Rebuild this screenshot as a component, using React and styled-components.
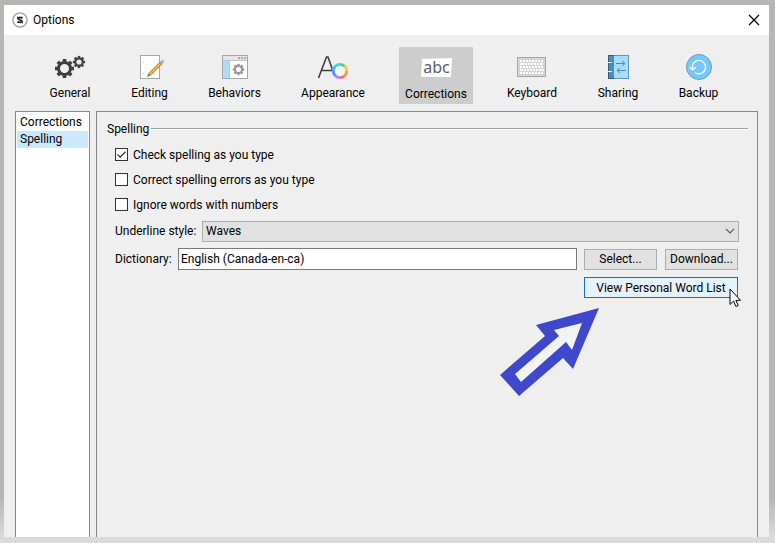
import React from 'react';
import styled, { createGlobalStyle } from 'styled-components';

const GlobalStyle = createGlobalStyle`
  *, *::before, *::after { box-sizing: border-box; }
  body { margin: 0; background: #dadbda; }
  body, button, input, select { font: 12px/16px Roboto, "Open Sans", sans-serif; color: #000; }
`;

const Desktop = styled.div`
  display: flex;
  min-height: 100vh;
  padding: 5px 6px 6px 4px;
  background: linear-gradient(to bottom, #b5b7b5 calc(100% - 45px), #d9dad9 calc(100% - 6px));
`;
const Dialog = styled.main`
  flex: 1;
  min-width: 0;
  display: flex;
  flex-direction: column;
  background: #efefef;
`;
const TitleBar = styled.header`
  display: flex;
  align-items: center;
  gap: 5px;
  height: 30px;
  padding: 0 9px 0 8px;
  background: #fff;
`;
const Title = styled.h1`
  flex: 1;
  margin: 0;
  font-size: 12px;
  line-height: 16px;
  font-weight: 400;
`;
const CloseButton = styled.button`
  display: flex;
  padding: 0;
  border: 0;
  background: none;
`;
const Toolbar = styled.nav`
  display: flex;
  gap: 27px;
  padding: 12px 12px 7px 39px;
`;
const Tab = styled.button`
  display: flex;
  flex-direction: column;
  align-items: center;
  flex: 0 0 ${(p) => p.$width}px;
  height: 57px;
  gap: 3px;
  padding: ${(p) => (p.$active ? 6 : 5)}px 0 0;
  border: 0;
  background: ${(p) => (p.$active ? '#cdcdcd' : 'transparent')};
  white-space: nowrap;
  svg { display: block; flex: none; }
`;
const Content = styled.div`
  flex: 1;
  display: flex;
  gap: 6px;
  padding: 0 11px;
`;
const Sidebar = styled.ul`
  flex: 0 0 75px;
  margin: 0;
  padding: 2px 1px;
  list-style: none;
  border: 1px solid #828790;
  border-bottom: 0;
  background: #fff;
`;
const SidebarLink = styled.a`
  display: block;
  padding: 0 3px;
  line-height: 17px;
  color: #000;
  text-decoration: none;
  background: ${(p) => (p.$active ? '#cce8ff' : 'transparent')};
`;
const Panel = styled.section`
  flex: 1;
  min-width: 0;
  padding: 9px 9px 0 10px;
  border: 1px solid #828790;
  border-bottom: 0;
`;
const Heading = styled.h2`
  display: flex;
  align-items: center;
  gap: 2px;
  margin: 0;
  font-size: 12px;
  line-height: 16px;
  font-weight: 400;
  &::after {
    content: "";
    flex: 1;
    height: 2px;
    background: linear-gradient(#a0a0a0 50%, #fff 50%);
  }
`;
const Form = styled.form`
  display: flex;
  flex-direction: column;
  padding: 5px 9px 0 8px;
`;
const CheckRow = styled.label`
  display: flex;
  align-items: center;
  gap: 5px;
  height: 25px;
`;
const CheckMark = styled.span`
  display: grid;
  width: 13px;
  height: 13px;
  > * { grid-area: 1 / 1; }
  svg { visibility: hidden; pointer-events: none; }
  input:checked + svg { visibility: visible; }
`;
const CheckInput = styled.input`
  appearance: none;
  width: 13px;
  height: 13px;
  margin: 0;
  border: 1px solid #333;
  background: #fff;
`;
const FieldRow = styled.div`
  display: flex;
  align-items: center;
  height: 28px;
  gap: 7px;
`;
const FieldLabel = styled.label`
  flex: none;
  width: ${(p) => p.$width}px;
  white-space: nowrap;
`;
const SelectBox = styled.div`
  flex: 1;
  display: grid;
  align-items: center;
  > * { grid-area: 1 / 1; }
  svg { justify-self: end; margin-right: 4px; pointer-events: none; }
`;
const Select = styled.select`
  appearance: none;
  width: 100%;
  height: 21px;
  padding: 0 3px;
  border: 1px solid #adadad;
  border-radius: 0;
  background: #e1e1e1;
`;
const TextInput = styled.input`
  flex: 1;
  min-width: 0;
  height: 22px;
  padding: 0 2px;
  border: 1px solid #7a7a7a;
  background: #fff;
`;
const PushButton = styled.button`
  flex: none;
  width: ${(p) => p.$width}px;
  height: 21px;
  padding: 0;
  white-space: nowrap;
  border: 1px solid ${(p) => (p.$hot ? '#0078d7' : '#adadad')};
  background: ${(p) => (p.$hot ? '#e5f1fb' : '#e1e1e1')};
`;
const Buttons = styled.div`
  display: flex;
  gap: 8px;
  margin-right: 1px;
`;
const Callout = styled.div`
  position: relative;
  align-self: flex-end;
  display: flex;
  margin: 4px 1px 0 0;
`;
const Pointer = styled.svg`
  position: absolute;
  left: 145px;
  top: 11px;
  pointer-events: none;
`;
const Arrow = styled.svg`
  position: absolute;
  right: 138px;
  top: 31px;
  pointer-events: none;
`;

const teeth = (n, r, w, h, cx, cy) =>
  Array.from({ length: n }, (_, i) => (
    <rect key={i} x={cx - w / 2} y={cy - r - h} width={w} height={h + 1} transform={`rotate(${(i * 360) / n} ${cx} ${cy})`} />
  ));
function Gear({ cx, cy, r, stroke, tooth, depth, color, count = 8 }) {
  return (
    <g fill={color}>
      {teeth(count, r, tooth, depth, cx, cy)}
      <circle cx={cx} cy={cy} r={r - stroke / 2} fill="none" stroke={color} strokeWidth={stroke} />
    </g>
  );
}
const Icon = ({ children }) => (
  <svg width="32" height="30" viewBox="0 0 32 30" aria-hidden="true">{children}</svg>
);

const GeneralIcon = () => (
  <Icon>
    <Gear cx={10.5} cy={16.5} r={7.5} stroke={3} tooth={3.6} depth={2} color="#404040" />
    <Gear cx={25} cy={10} r={4.8} stroke={2.2} tooth={2.4} depth={1.3} color="#404040" />
  </Icon>
);
const EditingIcon = () => (
  <Icon>
    <rect x="6.5" y="3.5" width="19" height="23" fill="#fff" stroke="#a6a6a6" />
    <path d="M9 10.5h1M9 21.5h1" stroke="#bbb" />
    <path d="M15.5 22.5 27 11" stroke="#b98a25" strokeWidth="3.4" />
    <path d="M15.5 22.5 27 11" stroke="#f0c253" strokeWidth="1.6" />
    <path d="m14.3 21.3-1.3 3.7 3.7-1.3z" fill="#777" />
    <path d="m26.3 11.7 1.5-1.5" stroke="#999" strokeWidth="3.4" />
    <path d="m28 10 .6-.6" stroke="#d69adf" strokeWidth="3" strokeLinecap="round" />
  </Icon>
);
const BehaviorsIcon = () => (
  <Icon>
    <rect x="3.5" y="3.5" width="25" height="23" fill="#fff" stroke="#a6a6a6" />
    <path d="M4 4h24v4H4z" fill="#e5e5e5" />
    <path d="M4 9h6v17H4z" fill="#aadcfb" />
    <path d="M4 8.5h24M10.5 9v17" stroke="#c4c4c4" />
    <path d="M19 6h2m1 0h2m1 0h2" stroke="#aaa" strokeWidth="2" />
    <Gear cx={19.5} cy={17.5} r={4.5} stroke={2} tooth={2.4} depth={1.2} color="#999" />
  </Icon>
);
const wheel = ['#55cc88', '#ffc933', '#ff9a3c', '#ff6b70', '#b788f5', '#6884f5', '#4bb7f2', '#45d5dd'];
const AppearanceIcon = () => (
  <Icon>
    <path d="M1.5 26 9.5 5H11l6 17M4.5 18.5h11" fill="none" stroke="#404040" strokeWidth="1.6" />
    <circle cx="23" cy="19" r="6.5" fill="#f3f3f3" />
    {wheel.map((c, i) => (
      <circle key={c} cx="23" cy="19" r="6.7" fill="none" stroke={c} strokeWidth="2.8" pathLength="80" strokeDasharray="10.5 69.5" transform={`rotate(${i * 45 - 90} 23 19)`} />
    ))}
  </Icon>
);
const CorrectionsIcon = () => (
  <Icon>
    <path d="m2 6 30-1-1 19H1z" fill="#fff" />
    <text x="16.5" y="20" textAnchor="middle" fontFamily="Noto Sans, sans-serif" fontSize="16" fill="#606060">abc</text>
  </Icon>
);
const KeyboardIcon = () => (
  <Icon>
    <rect x="1.5" y="5.5" width="28" height="19" fill="#d4d4d4" stroke="#a6a6a6" />
    <path d="M4 9h24M4 15h24M4 21h24" stroke="#fff" strokeWidth="2" strokeDasharray="2 1" />
    <path d="M4 12h4m1 0h2m1 0h2m1 0h2m1 0h2m1 0h2m1 0h3M4 18h3m1 0h2m1 0h2m1 0h2m1 0h2m1 0h2m1 0h5" stroke="#fff" strokeWidth="2" />
  </Icon>
);
const SharingIcon = () => (
  <Icon>
    <rect x="6.5" y="3.5" width="20" height="23" fill="#a9ddff" stroke="#6893ad" />
    <path d="M7 4h5v22H7z" fill="#438fc5" />
    <path d="M6.5 3v24M6 3.5h6M6 26.5h6" stroke="#345c75" />
    <path d="M6 10.5h4M6 19.5h4" stroke="#e5f5ff" />
    <path d="M14 11.5h9m-3-2.5 3 2.5-3 2.5M24 18.5h-9m3-2.5-3 2.5 3 2.5" fill="none" stroke="#438fc5" />
  </Icon>
);
const BackupIcon = () => (
  <Icon>
    <circle cx="16" cy="15" r="12.5" fill="#75c7fc" stroke="#679ebd" />
    <path d="M9.7 17.5a6.7 6.7 0 1 1 2.5 3.2M6.5 15l3 3 3.3-2.8" fill="none" stroke="#fff" strokeWidth="1.2" />
  </Icon>
);

const tabs = [
  ['General', 54, GeneralIcon],
  ['Editing', 51, EditingIcon],
  ['Behaviors', 65, BehaviorsIcon],
  ['Appearance', 78, AppearanceIcon],
  ['Corrections', 74, CorrectionsIcon],
  ['Keyboard', 64, KeyboardIcon],
  ['Sharing', 54, SharingIcon],
  ['Backup', 53, BackupIcon],
];
const checks = [
  ['Check spelling as you type', true],
  ['Correct spelling errors as you type', false],
  ['Ignore words with numbers', false],
];

export default function App() {
  return (
    <Desktop>
      <GlobalStyle />
      <Dialog>
        <TitleBar>
          <svg width="16" height="16" viewBox="0 0 16 16" aria-hidden="true">
            <circle cx="8" cy="8" r="7" fill="#fff" stroke="#a3a7ad" strokeWidth="1.5" />
            <path d="M5.5 4.5v3M10.5 8.500v3" stroke="#555" />
            <path d="M10.500 5 9.500 6C8 4.800 6 5.500 6.500 6.800s3.200 1 3.200 2.400-2 1.500-3.200.6l-1 1" fill="none" stroke="#222" strokeWidth="1.600" />
          </svg>
          <Title>Options</Title>
          <CloseButton aria-label="Close">
            <svg width="12" height="12" viewBox="0 0 12 12"><path d="m1 1 10 10M11 1 1 11" stroke="#000" strokeWidth="1.200" /></svg>
          </CloseButton>
        </TitleBar>
        <Toolbar aria-label="Options categories">
          {tabs.map(([name, width, TabIcon]) => (
            <Tab key={name} type="button" $width={width} $active={name === 'Corrections'}>
              <TabIcon />
              {name}
            </Tab>
          ))}
        </Toolbar>
        <Content>
          <Sidebar>
            <li><SidebarLink href="#corrections">Corrections</SidebarLink></li>
            <li><SidebarLink href="#spelling" $active>Spelling</SidebarLink></li>
          </Sidebar>
          <Panel>
            <Heading>Spelling</Heading>
            <Form>
              {checks.map(([label, on]) => (
                <CheckRow key={label}>
                  <CheckMark>
                    <CheckInput type="checkbox" defaultChecked={on} />
                    <svg width="13" height="13" viewBox="0 0 13 13"><path d="m2.500 6.500 2.700 2.700 5.300-5.400" fill="none" stroke="#333" strokeWidth="1.3" /></svg>
                  </CheckMark>
                  {label}
                </CheckRow>
              ))}
              <FieldRow>
                <FieldLabel htmlFor="underline" $width={80}>Underline style:</FieldLabel>
                <SelectBox>
                  <Select id="underline" defaultValue="Waves"><option>Waves</option></Select>
                  <svg width="10" height="6" viewBox="0 0 10 6"><path d="m1 .8 4 4 4-4" fill="none" stroke="#555" strokeWidth="1.2" /></svg>
                </SelectBox>
              </FieldRow>
              <FieldRow>
                <FieldLabel htmlFor="dictionary" $width={56}>Dictionary:</FieldLabel>
                <TextInput id="dictionary" defaultValue="English (Canada-en-ca)" />
                <Buttons>
                  <PushButton type="button" $width={73}>Select...</PushButton>
                  <PushButton type="button" $width={73}>Download...</PushButton>
                </Buttons>
              </FieldRow>
              <Callout>
                <PushButton type="button" $width={154} $hot>View Personal Word List</PushButton>
                <Pointer width="13" height="20" viewBox="0 0 13 20" aria-hidden="true">
                  <path d="M1 1v15.500l3.600-3.400 2.300 5.400 2.300-1-2.300-5.200h4.600z" fill="#fff" stroke="#000" />
                </Pointer>
                <Arrow width="100" height="90" viewBox="0 0 100 90" aria-hidden="true">
                  <path fill="#3f48cc" d="M99 0 36 17l9 11L0 67l19 21 44-38 10 11z" />
                  <path fill="#f3f3f3" d="M82 15 54 22l5 6-44 38 6 8 45-40 6 8z" />
                </Arrow>
              </Callout>
            </Form>
          </Panel>
        </Content>
      </Dialog>
    </Desktop>
  );
}
